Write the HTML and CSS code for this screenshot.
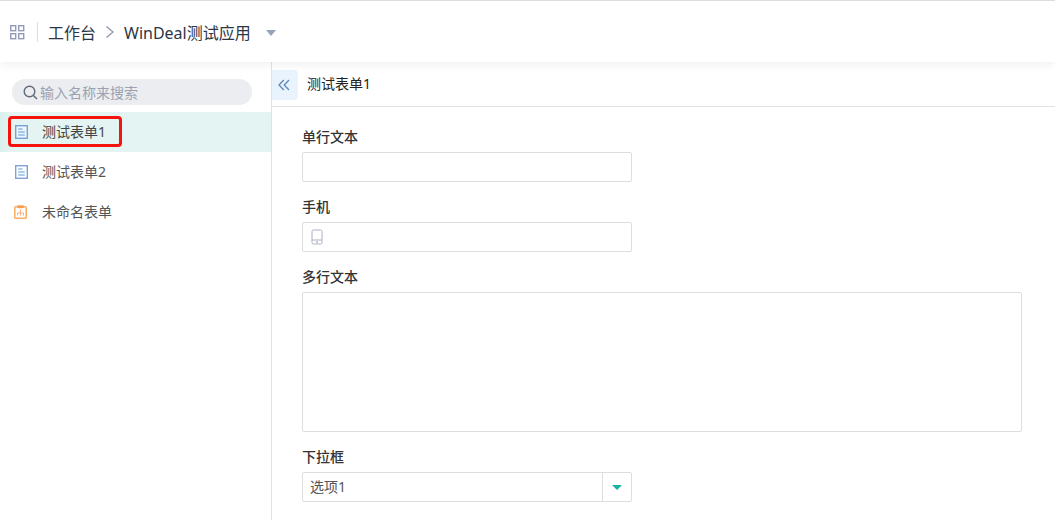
FILE: index.html
```html
<!DOCTYPE html>
<html lang="zh-CN">
<head>
  <meta charset="UTF-8" />
  <title>WinDeal测试应用</title>
  <link rel="stylesheet" href="styles.css">
</head>
<body>
  <header class="topbar">
    <svg class="apps-icon" width="16" height="16" viewBox="0 0 16 16" fill="none" stroke="#8f9bb8" stroke-width="1.4">
      <rect x="1.7" y="1.7" width="5" height="5" />
      <rect x="9.7" y="1.7" width="5" height="5" />
      <rect x="1.7" y="9.7" width="5" height="5" />
      <rect x="9.7" y="9.7" width="5" height="5" />
    </svg>
    <div class="topbar-sep"></div>
    <span class="crumb">工作台</span>
    <svg class="crumb-arrow" width="10" height="14" viewBox="0 0 10 14" fill="none" stroke="#8a94a6" stroke-width="1.2">
      <path d="M1.5 1.5 L8 7 L1.5 12.5" />
    </svg>
    <span class="crumb">WinDeal测试应用</span>
    <span class="caret"></span>
  </header>

  <div class="main">
    <aside class="sidebar">
      <div class="search">
        <svg width="15" height="15" viewBox="0 0 15 15" fill="none" stroke="#5f6b7c" stroke-width="1.4">
          <circle cx="6.5" cy="6.5" r="5.3" />
          <path d="M10.4 10.4 L14 14" />
        </svg>
        <span class="search-text">输入名称来搜索</span>
      </div>

      <div class="menu-item active">
        <svg class="form-icon" width="14" height="14" viewBox="0 0 14 14" fill="none">
          <rect x="0.7" y="0.7" width="11.6" height="12.6" stroke="#74a3d6" stroke-width="1.4" fill="#eef5fb" />
          <path d="M3.2 4 H7.5 M3.2 7 H9.8 M3.2 10 H9.8" stroke="#5b9bd5" stroke-width="1.2" />
        </svg>
        <span>测试表单1</span>
        <div class="mark"></div>
      </div>
      <div class="menu-item">
        <svg class="form-icon" width="14" height="14" viewBox="0 0 14 14" fill="none">
          <rect x="0.7" y="0.7" width="11.6" height="12.6" stroke="#7fa3d6" stroke-width="1.4" fill="#fff" />
          <path d="M3.2 4 H7.5 M3.2 7 H9.8 M3.2 10 H9.8" stroke="#5b9bd5" stroke-width="1.2" />
        </svg>
        <span>测试表单2</span>
      </div>
      <div class="menu-item">
        <svg class="form-icon draft-icon" width="14" height="14" viewBox="0 0 14 14" fill="none">
          <rect x="0.8" y="1.8" width="11.4" height="11.5" rx="1" stroke="#f9ae62" stroke-width="1.5" fill="#fff" />
          <rect x="3.2" y="0.3" width="6.6" height="2.8" fill="#f9a04e" />
          <path d="M6.5 4.5 V10.5 M3.5 10.5 V8 H9.5 V10.5" stroke="#f9b27a" stroke-width="1" />
        </svg>
        <span>未命名表单</span>
      </div>
    </aside>

    <section class="content">
      <div class="tabbar">
        <div class="collapse-btn">
          <svg width="12" height="12" viewBox="0 0 12 12" fill="none" stroke="#5f88b8" stroke-width="1.3">
            <path d="M5.8 1 L1 6 L5.8 11 M11 1 L6.2 6 L11 11" />
          </svg>
        </div>
        <span class="tab-title">测试表单1</span>
      </div>

      <form class="form">
        <div class="field">
          <label>单行文本</label>
          <div class="input"></div>
        </div>
        <div class="field">
          <label>手机</label>
          <div class="input">
            <svg class="phone-icon" width="12" height="16" viewBox="0 0 12 16" fill="none">
              <rect x="1" y="1" width="10" height="14" rx="1.5" stroke="#aab0c4" stroke-width="1" />
              <path d="M1 11 H11" stroke="#aab0c4" stroke-width="1" />
              <path d="M5 13 H7" stroke="#8d93a8" stroke-width="1" />
            </svg>
          </div>
        </div>
        <div class="field">
          <label>多行文本</label>
          <div class="textarea"></div>
        </div>
        <div class="field">
          <label>下拉框</label>
          <div class="input select">
            <span class="select-value">选项1</span>
            <div class="select-btn"><span class="select-caret"></span></div>
          </div>
        </div>
      </form>
    </section>
  </div>
</body>
</html>
```

FILE: styles.css
```css
html, body {
  margin: 0;
  padding: 0;
  height: 100%;
  background: #fff;
  overflow: hidden;
  color: #333;
  font-family: "Noto Sans", "Noto Sans CJK SC", sans-serif;
}

body {
  display: flex;
  flex-direction: column;
  height: 520px;
  border-top: 1px solid #ddd;
  box-sizing: border-box;
}

.topbar {
  display: flex;
  align-items: center;
  flex: 0 0 61px;
  padding-left: 9px;
  box-shadow: 0 2px 10px rgba(0, 0, 0, 0.07);
  position: relative;
  z-index: 2;
}

.topbar-sep {
  width: 1px;
  height: 20px;
  background: #ddd;
  margin: 0 10px 0 12px;
}

.crumb {
  font-size: 16px;
  color: #2c3645;
}

.crumb-arrow {
  margin: 0 9px 0 9px;
}

.caret {
  width: 0;
  height: 0;
  border-left: 5.5px solid transparent;
  border-right: 5.5px solid transparent;
  border-top: 6px solid #97a3b6;
  margin: 2px 0 0 15px;
}

.main {
  display: flex;
  flex: 1;
  min-height: 0;
}

.sidebar {
  width: 272px;
  flex: none;
  box-sizing: border-box;
  border-right: 1px solid #e2e2e2;
  padding-top: 17px;
}

.search {
  display: flex;
  align-items: center;
  width: 240px;
  height: 26px;
  margin: 0 0 7px 12px;
  padding-left: 11px;
  box-sizing: border-box;
  border-radius: 13px;
  background: #ebedf0;
}

.search-text {
  font-size: 14px;
  color: #9aa2b1;
  margin-left: 2px;
}

.menu-item {
  display: flex;
  align-items: center;
  height: 40px;
  padding-left: 15px;
  font-size: 14px;
  color: #555;
  position: relative;
}

.menu-item span {
  margin-bottom: 2px;
}

.menu-item.active {
  background: linear-gradient(to right, #d9f0ed, #e4f4f2 10px);
  color: #444;
}

.form-icon {
  margin-right: 13px;
}

.draft-icon {
  margin-left: -1px;
  margin-right: 14px;
}

.mark {
  position: absolute;
  left: 8px;
  top: 4px;
  width: 114px;
  height: 31px;
  box-sizing: border-box;
  border: 3px solid #f5130d;
  border-radius: 4px;
}

.content {
  flex: 1;
  min-width: 0;
}

.tabbar {
  display: flex;
  align-items: center;
  height: 44px;
  border-bottom: 1px solid #e2e2e2;
}

.collapse-btn {
  display: flex;
  align-items: center;
  justify-content: center;
  width: 26px;
  height: 30px;
  margin-top: 2px;
  padding-right: 3px;
  box-sizing: border-box;
  background: #e9f3fd;
  border-radius: 0 4px 4px 0;
}

.tab-title {
  font-size: 14px;
  color: #222;
  margin: 0 0 2px 9px;
}

.form {
  padding: 20px 0 0 30px;
}

.field {
  margin-bottom: 15px;
}

.field label {
  display: block;
  font-size: 14px;
  font-weight: 500;
  line-height: 20px;
  color: #333;
  margin-bottom: 5px;
}

.input {
  display: flex;
  align-items: center;
  width: 330px;
  height: 30px;
  box-sizing: border-box;
  border: 1px solid #dedede;
  border-radius: 2px;
  background: #fff;
}

.phone-icon {
  margin-left: 8px;
}

.textarea {
  width: 720px;
  height: 140px;
  box-sizing: border-box;
  border: 1px solid #dedede;
  border-radius: 2px;
}

.select {
  justify-content: space-between;
}

.select-value {
  font-size: 14px;
  color: #555;
  margin: 0 0 2px 7px;
}

.select-btn {
  display: flex;
  align-items: center;
  justify-content: center;
  width: 28px;
  height: 100%;
  border-left: 1px solid #dedede;
}

.select-caret {
  width: 0;
  height: 0;
  border-left: 5px solid transparent;
  border-right: 5px solid transparent;
  border-top: 5px solid #14b3a2;
}
```
